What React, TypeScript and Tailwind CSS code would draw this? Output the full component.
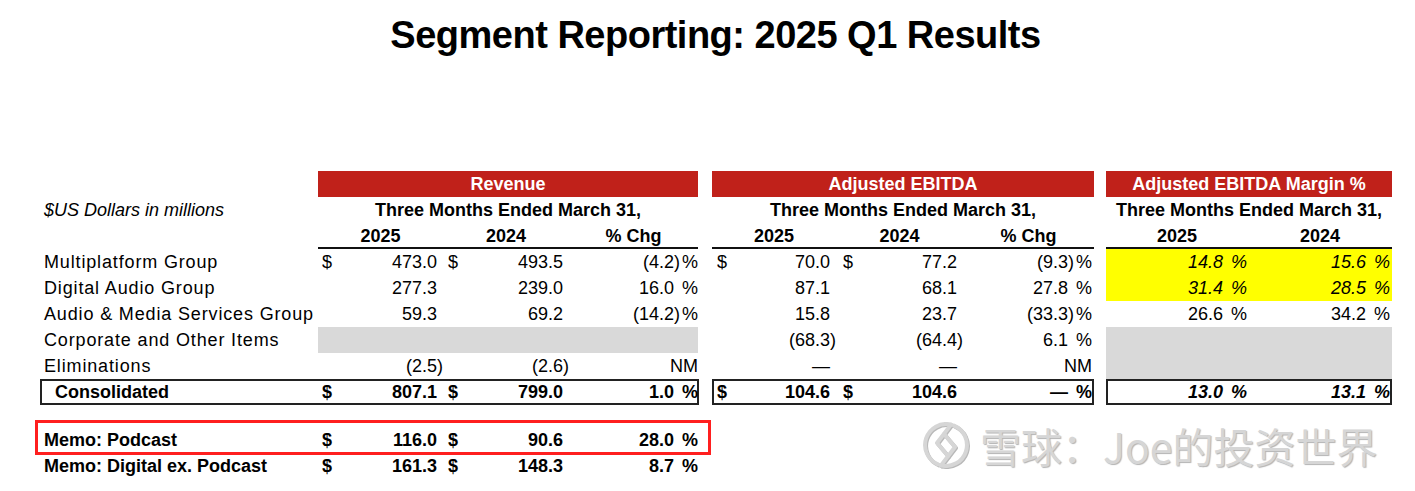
import React from "react";

type Rev = { d?: boolean; a?: string; b?: string; c?: string };

const rows: {
  label: string;
  rev: Rev;
  ebitda: Rev;
  margin?: [string, string];
  revGray?: boolean;
  marginGray?: boolean;
  yellow?: boolean;
}[] = [
  {
    label: "Multiplatform Group",
    rev: { d: true, a: "473.0", b: "493.5", c: "(4.2)" },
    ebitda: { d: true, a: "70.0", b: "77.2", c: "(9.3)" },
    margin: ["14.8", "15.6"],
    yellow: true,
  },
  {
    label: "Digital Audio Group",
    rev: { a: "277.3", b: "239.0", c: "16.0" },
    ebitda: { a: "87.1", b: "68.1", c: "27.8" },
    margin: ["31.4", "28.5"],
    yellow: true,
  },
  {
    label: "Audio & Media Services Group",
    rev: { a: "59.3", b: "69.2", c: "(14.2)" },
    ebitda: { a: "15.8", b: "23.7", c: "(33.3)" },
    margin: ["26.6", "34.2"],
  },
  {
    label: "Corporate and Other Items",
    rev: {},
    ebitda: { a: "(68.3)", b: "(64.4)", c: "6.1" },
    revGray: true,
    marginGray: true,
  },
  {
    label: "Eliminations",
    rev: { a: "(2.5)", b: "(2.6)", c: "NM" },
    ebitda: { a: "—", b: "—", c: "NM" },
    marginGray: true,
  },
];

function Num({ v }: { v: string }) {
  const neg = v.startsWith("(");
  return (
    <>
      <span>{neg ? v.slice(0, -1) : v}</span>
      <span className={neg ? "" : "invisible"}>)</span>
    </>
  );
}

function Pct({ v }: { v?: string }) {
  if (!v) return null;
  if (v === "NM") return <span>NM</span>;
  return (
    <>
      <Num v={v} />
      <span className="ml-[2px]">%</span>
    </>
  );
}

function RevenueCells({ r, gray }: { r: Rev; gray?: boolean }) {
  return (
    <div className={`flex w-[380px] ${gray ? "bg-[#d9d9d9]" : ""}`}>
      <div className="flex w-[125px] pl-[4px]">
        {r.d && <span>$</span>}
        {r.a && (
          <span className="ml-auto">
            <Num v={r.a} />
          </span>
        )}
      </div>
      <div className="flex w-[126px] pl-[5px]">
        {r.d && <span>$</span>}
        {r.b && (
          <span className="ml-auto">
            <Num v={r.b} />
          </span>
        )}
      </div>
      <div className="flex w-[129px] justify-end">
        <Pct v={r.c} />
      </div>
    </div>
  );
}

function EbitdaCells({ r }: { r: Rev }) {
  return (
    <div className="flex w-[382px]">
      <div className="flex w-[124px] pl-[5px]">
        {r.d && <span>$</span>}
        {r.a && (
          <span className="ml-auto">
            <Num v={r.a} />
          </span>
        )}
      </div>
      <div className="flex w-[127px] pl-[7px]">
        {r.d && <span>$</span>}
        {r.b && (
          <span className="ml-auto">
            <Num v={r.b} />
          </span>
        )}
      </div>
      <div className="flex w-[131px] justify-end pr-[2px]">
        <Pct v={r.c} />
      </div>
    </div>
  );
}

function MarginCells({ m, bg, italic }: { m?: [string, string]; bg: string; italic?: boolean }) {
  return (
    <div className={`flex w-[286px] ${italic ? "italic" : ""} ${bg}`}>
      <div className="flex w-[142px] justify-end pr-[1px]">{m && <Pct v={m[0]} />}</div>
      <div className="flex w-[144px] justify-end pr-[2px]">{m && <Pct v={m[1]} />}</div>
    </div>
  );
}

function XueqiuLogo() {
  return (
    <svg width="52" height="52" viewBox="0 0 52 52" fill="none">
      <g
        stroke="#d6d6d6"
        strokeWidth="4"
        strokeLinecap="round"
        strokeLinejoin="round"
        style={{ filter: "drop-shadow(1px 1px 0.6px rgba(0,0,0,0.28))" }}
      >
        {/* left half */}
        <path d="M31 5.6 A21 21 0 0 0 18 45.4" />
        <path d="M31 5.6 L17 24 L28 37" />
        {/* right half */}
        <path d="M21 46.4 A21 21 0 0 0 34 6.6" />
        <path d="M21 46.4 L35 28 L24 15" />
      </g>
    </svg>
  );
}

export default function App() {
  return (
    <div className="relative h-[491px] w-[1415px] overflow-hidden bg-white font-['Liberation_Sans',Arial,sans-serif] text-[18px] text-black">
      <h1 className="pl-[16px] pt-[16px] text-center text-[38px] font-bold leading-[38px] tracking-[-0.5px]">
        Segment Reporting: 2025 Q1 Results
      </h1>

      <div className="mt-[117px] leading-[26px]">
        {/* section headers */}
        <div className="flex h-[26px] font-bold text-white">
          <div className="w-[318px]" />
          <div className="w-[380px] bg-[#c0211a] text-center">Revenue</div>
          <div className="w-[14px]" />
          <div className="w-[382px] bg-[#c0211a] text-center">Adjusted EBITDA</div>
          <div className="w-[12px]" />
          <div className="w-[286px] bg-[#c0211a] text-center">Adjusted EBITDA Margin %</div>
        </div>

        <div className="flex h-[26px]">
          <div className="w-[318px] pl-[44px] italic">$US Dollars in millions</div>
          <div className="w-[380px] text-center font-bold">Three Months Ended March 31,</div>
          <div className="w-[14px]" />
          <div className="w-[382px] text-center font-bold">Three Months Ended March 31,</div>
          <div className="w-[12px]" />
          <div className="w-[286px] text-center font-bold">Three Months Ended March 31,</div>
        </div>

        <div className="flex h-[26px] font-bold">
          <div className="w-[318px]" />
          <div className="flex w-[380px] text-center shadow-[inset_0_-2px_0_#111]">
            <div className="w-[125px]">2025</div>
            <div className="w-[126px]">2024</div>
            <div className="w-[129px]">% Chg</div>
          </div>
          <div className="w-[14px]" />
          <div className="flex w-[382px] text-center shadow-[inset_0_-2px_0_#111]">
            <div className="w-[124px]">2025</div>
            <div className="w-[127px]">2024</div>
            <div className="w-[131px]">% Chg</div>
          </div>
          <div className="w-[12px]" />
          <div className="flex w-[286px] text-center shadow-[inset_0_-2px_0_#111]">
            <div className="w-[142px]">2025</div>
            <div className="w-[144px]">2024</div>
          </div>
        </div>

        {rows.map((r) => (
          <div key={r.label} className="flex h-[26px]">
            <div className="w-[318px] pl-[44px] tracking-[0.85px]">{r.label}</div>
            <RevenueCells r={r.rev} gray={r.revGray} />
            <div className="w-[14px]" />
            <EbitdaCells r={r.ebitda} />
            <div className="w-[12px]" />
            <MarginCells
              m={r.margin}
              italic={r.yellow}
              bg={r.yellow ? "bg-[#ffff00]" : r.marginGray ? "bg-[#d9d9d9]" : ""}
            />
          </div>
        ))}

        {/* consolidated */}
        <div className="flex h-[26px] font-bold">
          <div className="ml-[40px] flex w-[659px] shadow-[inset_0_0_0_2px_#222]">
            <div className="w-[278px] pl-[15px]">Consolidated</div>
            <RevenueCells r={{ d: true, a: "807.1", b: "799.0", c: "1.0" }} />
          </div>
          <div className="w-[13px]" />
          <div className="flex shadow-[inset_0_0_0_2px_#222]">
            <EbitdaCells r={{ d: true, a: "104.6", b: "104.6", c: "—" }} />
          </div>
          <div className="w-[12px]" />
          <div className="flex shadow-[inset_0_0_0_2px_#222]">
            <MarginCells m={["13.0", "13.1"]} bg="" italic />
          </div>
        </div>

        {/* memo lines */}
        <div className="relative mt-[22px] font-bold">
          <div className="flex h-[26px]">
            <div className="w-[318px] pl-[44px]">Memo: Podcast</div>
            <RevenueCells r={{ d: true, a: "116.0", b: "90.6", c: "28.0" }} />
          </div>
          <div className="flex h-[26px]">
            <div className="w-[318px] pl-[44px]">Memo: Digital ex. Podcast</div>
            <RevenueCells r={{ d: true, a: "161.3", b: "148.3", c: "8.7" }} />
          </div>
          <div className="pointer-events-none absolute left-[35px] top-[-7px] h-[35px] w-[676px] border-[3px] border-[#ff1f1f]" />
        </div>
      </div>

      {/* watermark */}
      <div className="pointer-events-none absolute left-[920px] top-[419px] flex items-center">
        <XueqiuLogo />
        <span className="ml-[8px] font-['Noto_Sans_CJK_SC',sans-serif] text-[41px] leading-[52px] text-[#d6d6d6] [text-shadow:1px_1px_1px_rgba(0,0,0,0.3)]">
          雪球：Joe的投资世界
        </span>
      </div>
    </div>
  );
}
